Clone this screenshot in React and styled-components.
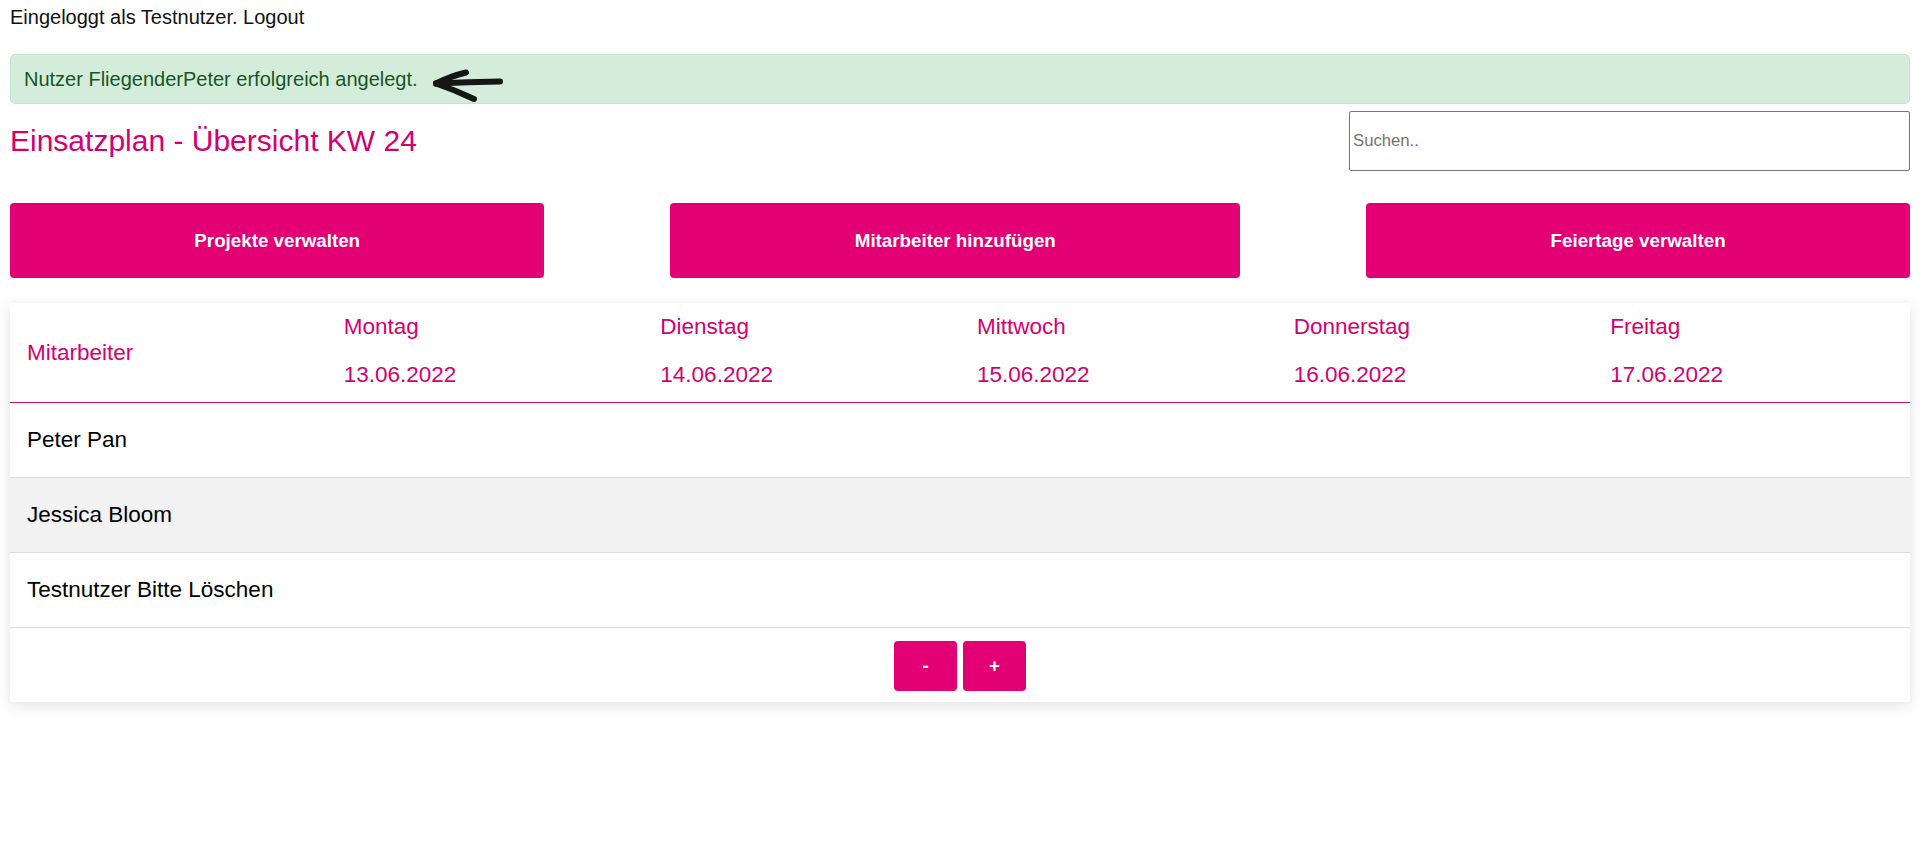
import styled, { createGlobalStyle } from "styled-components"

const GlobalStyle = createGlobalStyle`
    html, body {
        margin: 0;
        padding: 0;
        background: #ffffff;
    }
    body {
        font-family: "Liberation Sans", Arial, Helvetica, sans-serif;
        color: #000000;
    }
    * {
        box-sizing: border-box;
    }
`

const days = [
    { name: 'Montag', date: '13.06.2022' },
    { name: 'Dienstag', date: '14.06.2022' },
    { name: 'Mittwoch', date: '15.06.2022' },
    { name: 'Donnerstag', date: '16.06.2022' },
    { name: 'Freitag', date: '17.06.2022' },
]

const employees = ['Peter Pan', 'Jessica Bloom', 'Testnutzer Bitte Löschen']

const HandArrow = () => (
    <ArrowSvg width="70" height="23" viewBox="0 0 70 23">
        <path d="M3 15.5 Q 35 14 67 13.5" />
        <path d="M3 15.5 Q 18 8 33 4.5" />
        <path d="M3 15.5 Q 22 22 41 31" />
    </ArrowSvg>
)

export default function App() {
    return (
        <>
            <GlobalStyle />
            <Page>
                <LoginInfo>Eingeloggt als Testnutzer. Logout</LoginInfo>

                <Alert>
                    <span>Nutzer FliegenderPeter erfolgreich angelegt.</span>
                    <HandArrow />
                </Alert>

                <TitleRow>
                    <Title>Einsatzplan - Übersicht KW 24</Title>
                    <SearchInput type="text" placeholder="Suchen.." />
                </TitleRow>

                <ActionBar>
                    <ActionButton type="button">Projekte verwalten</ActionButton>
                    <ActionButton type="button">Mitarbeiter hinzufügen</ActionButton>
                    <ActionButton type="button">Feiertage verwalten</ActionButton>
                </ActionBar>

                <Card>
                    <HeaderRow>
                        <HeaderCell>Mitarbeiter</HeaderCell>
                        {days.map(day => (
                            <DayCell key={day.name}>
                                <span>{day.name}</span>
                                <span>{day.date}</span>
                            </DayCell>
                        ))}
                    </HeaderRow>

                    {employees.map((name, i) => (
                        <Row key={name} $striped={i % 2 === 1}>
                            <NameCell>{name}</NameCell>
                            {days.map(day => <Cell key={day.name} />)}
                        </Row>
                    ))}

                    <Footer>
                        <SmallButton type="button">-</SmallButton>
                        <SmallButton type="button">+</SmallButton>
                    </Footer>
                </Card>
            </Page>
        </>
    )
}

const Page = styled.div`
    padding: 6px 10px 40px;
    display: flex;
    flex-direction: column;
`

const LoginInfo = styled.div`
    font-size: 20px;
    line-height: 23px;
    color: #111;
`

const Alert = styled.div`
    margin-top: 25px;
    height: 50px;
    padding: 0 13px;
    display: flex;
    align-items: center;

    font-size: 20px;
    line-height: 23px;
    color: #155724;
    background-color: #d4edda;
    border: 1px solid #c3e6cb;
    border-radius: 5px;
`

const ArrowSvg = styled.svg`
    margin-left: 15px;
    overflow: visible;

    & path {
        fill: none;
        stroke: #161616;
        stroke-width: 6;
        stroke-linecap: round;
    }
`

const TitleRow = styled.div`
    margin-top: 7px;
    display: flex;
    align-items: center;
    justify-content: space-between;
`

const Title = styled.h2`
    margin: 0;
    font-size: 30px;
    font-weight: normal;
    color: #d5006f;
`

const SearchInput = styled.input`
    width: 561px;
    height: 60px;
    padding: 0 3px;
    font-family: "Liberation Sans", Arial, sans-serif;
    font-size: 16.7px;
    border: 1px solid #767676;
    border-radius: 2px;

    &::placeholder {
        color: #757575;
    }
`

const ActionBar = styled.div`
    margin-top: 32px;
    display: flex;
    gap: 126px;
`

const ActionButton = styled.button`
    flex: 1 1 auto;
    height: 75px;
    padding: 0;
    border: none;
    border-radius: 4px;

    font-family: "Liberation Sans", Arial, sans-serif;
    font-size: 18.75px;
    font-weight: bold;
    color: #ffffff;
    background-color: #e20074;
    cursor: pointer;
`

const Card = styled.div`
    margin-top: 25px;
    background-color: #ffffff;
    box-shadow: 0 3px 14px rgba(0, 0, 0, 0.12);
`

const Grid = styled.div`
    display: grid;
    grid-template-columns: repeat(6, 1fr);
`

const HeaderRow = styled(Grid)`
    height: 100px;
    border-bottom: 1px solid #c8126f;
    color: #d5006f;
    font-size: 22.5px;
`

const HeaderCell = styled.div`
    padding-left: 17px;
    display: flex;
    align-items: center;
`

const DayCell = styled.div`
    padding: 11px 0 0 17px;
    display: flex;
    flex-direction: column;
    gap: 22px;
    line-height: 26px;
`

const Row = styled(Grid)`
    height: 75px;
    border-bottom: 1px solid #dddddd;
    background-color: ${p => p.$striped ? '#f2f2f2' : '#ffffff'};
`

const Cell = styled.div``

const NameCell = styled.div`
    padding-left: 17px;
    display: flex;
    align-items: center;
    font-size: 22.5px;
    white-space: nowrap;
`

const Footer = styled.div`
    padding: 13px 0 11px;
    display: flex;
    justify-content: center;
    gap: 6px;
`

const SmallButton = styled.button`
    width: 63px;
    height: 50px;
    border: none;
    border-radius: 4px;

    font-family: "Liberation Sans", Arial, sans-serif;
    font-size: 18.75px;
    font-weight: bold;
    color: #ffffff;
    background-color: #e20074;
    cursor: pointer;
`
